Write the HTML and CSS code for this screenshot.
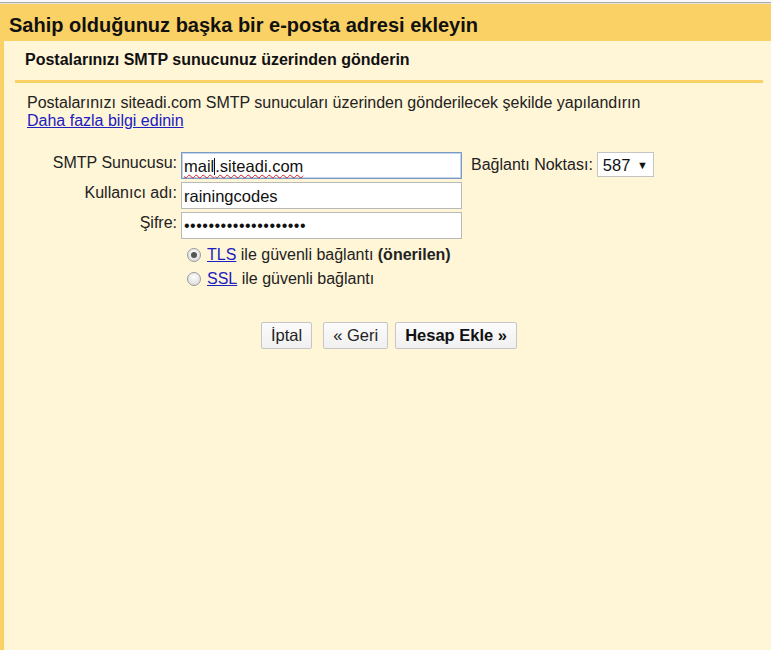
FILE: index.html
```html
<!DOCTYPE html>
<html lang="tr">
<head>
<meta charset="utf-8">
<title>E-posta adresi ekleyin</title>
<link rel="stylesheet" href="styles.css">
</head>
<body>
<div class="topstrip"></div>
<div class="header">Sahip olduğunuz başka bir e-posta adresi ekleyin</div>
<div class="content">
  <div class="subtitle">Postalarınızı SMTP sunucunuz üzerinden gönderin</div>
  <div class="rule"></div>
  <div class="desc">
    <div>Postalarınızı siteadi.com SMTP sunucuları üzerinden gönderilecek şekilde yapılandırın</div>
    <a class="link" href="#">Daha fazla bilgi edinin</a>
  </div>
  <div class="form">
    <div class="row">
      <label class="label">SMTP Sunucusu:</label>
      <div class="field focused"><span class="spell">mail</span><span class="caret"></span><span class="spell">.siteadi.com</span></div>
      <span class="portlabel">Bağlantı Noktası:</span>
      <div class="select">587 <span class="arrow">▼</span></div>
    </div>
    <div class="row">
      <label class="label">Kullanıcı adı:</label>
      <div class="field">rainingcodes</div>
    </div>
    <div class="row">
      <label class="label">Şifre:</label>
      <div class="field dots">••••••••••••••••••••</div>
    </div>
    <div class="radios">
      <div class="radio-row"><span class="radio checked"></span><a class="link" href="#">TLS</a>&nbsp;ile güvenli bağlantı&nbsp;<b>(önerilen)</b></div>
      <div class="radio-row"><span class="radio"></span><a class="link" href="#">SSL</a>&nbsp;ile güvenli bağlantı</div>
    </div>
  </div>
  <div class="buttons">
    <button class="btn">İptal</button>
    <button class="btn btn-back">« Geri</button>
    <button class="btn btn-primary">Hesap Ekle »</button>
  </div>
</div>
</body>
</html>
```
FILE: styles.css
```css
html, body {
  margin: 0;
  height: 100%;
}
body {
  font-family: "Liberation Sans", Arial, sans-serif;
  color: #222;
  background: #fff5d7;
  display: flex;
  flex-direction: column;
}
.topstrip {
  height: 2px;
  background: #fafafa;
  border-bottom: 1px solid #a9a9a9;
  box-shadow: 0 1px 0 #e8e4d8;
}
.header {
  margin-top: 1px;
  height: 37px;
  box-sizing: border-box;
  background: #fad165;
  padding: 10px 0 0 9px;
  font-size: 20px;
  font-weight: bold;
  color: #111;
}
.content {
  flex: 1;
  border-left: 4px solid #fad165;
  background: #fff5d7;
}
.subtitle {
  padding: 10px 0 0 21px;
  height: 29px;
  font-size: 16px;
  font-weight: bold;
  color: #111;
}
.rule {
  height: 3px;
  background: #fad165;
  margin: 0 8px 0 11px;
}
.desc {
  padding: 11px 0 0 23px;
  font-size: 16px;
  line-height: 18px;
}
.link {
  color: #2020c0;
  text-decoration: underline;
}
.form {
  margin-top: 22px;
  font-size: 16px;
}
.row {
  display: flex;
  align-items: flex-start;
  height: 30px;
}
.label {
  width: 173px;
  text-align: right;
  padding-top: 2px;
  box-sizing: border-box;
}
.field {
  margin-left: 4px;
  width: 281px;
  height: 27px;
  box-sizing: border-box;
  border: 1px solid #b9b9b9;
  background: #fff;
  padding: 4px 0 0 2px;
  font-size: 16.5px;
  color: #111;
}
.field.focused {
  border: 1px solid #7b9ac9;
  box-shadow: inset 0 0 0 1px #c5d4ea;
}
.spell {
  text-decoration: underline wavy #d02020;
  text-decoration-thickness: 1px;
  text-underline-offset: 2px;
}
.caret {
  display: inline-block;
  width: 1px;
  height: 17px;
  background: #111;
  vertical-align: -3px;
}
.dots {
  font-size: 16px;
  padding-top: 4px;
  letter-spacing: 0.5px;
}
.portlabel {
  margin-left: 9px;
  padding-top: 4px;
}
.select {
  margin-left: 4px;
  height: 25px;
  box-sizing: border-box;
  border: 1px solid #c4c4c4;
  background: #fff;
  padding: 3px 5px 0 5px;
  font-size: 16.5px;
  color: #111;
}
.arrow {
  font-size: 11px;
  vertical-align: 2px;
  margin-left: 2px;
}
.radios {
  margin-left: 183px;
  margin-top: 1px;
}
.radio-row {
  display: flex;
  align-items: center;
  height: 24px;
}
.radio {
  width: 14px;
  height: 14px;
  box-sizing: border-box;
  border-radius: 50%;
  border: 1px solid #9a9a9a;
  background: radial-gradient(circle at 50% 35%, #fefefe, #d4d4d4);
  margin-right: 6px;
  position: relative;
}
.radio.checked::after {
  content: "";
  position: absolute;
  left: 3px;
  top: 3px;
  width: 6px;
  height: 6px;
  border-radius: 50%;
  background: #555;
}
.buttons {
  display: flex;
  margin: 31px 0 0 257px;
}
.btn {
  font-family: "Liberation Sans", Arial, sans-serif;
  font-size: 16.5px;
  color: #222;
  height: 27px;
  padding: 0 9px;
  border: 1px solid #c6c6c6;
  border-radius: 2px;
  background: linear-gradient(#fbfbfb, #f0f0f0);
  margin-right: 11px;
}
.btn-back {
  margin-right: 7px;
}
.btn-primary {
  font-weight: bold;
  color: #111;
}
```
